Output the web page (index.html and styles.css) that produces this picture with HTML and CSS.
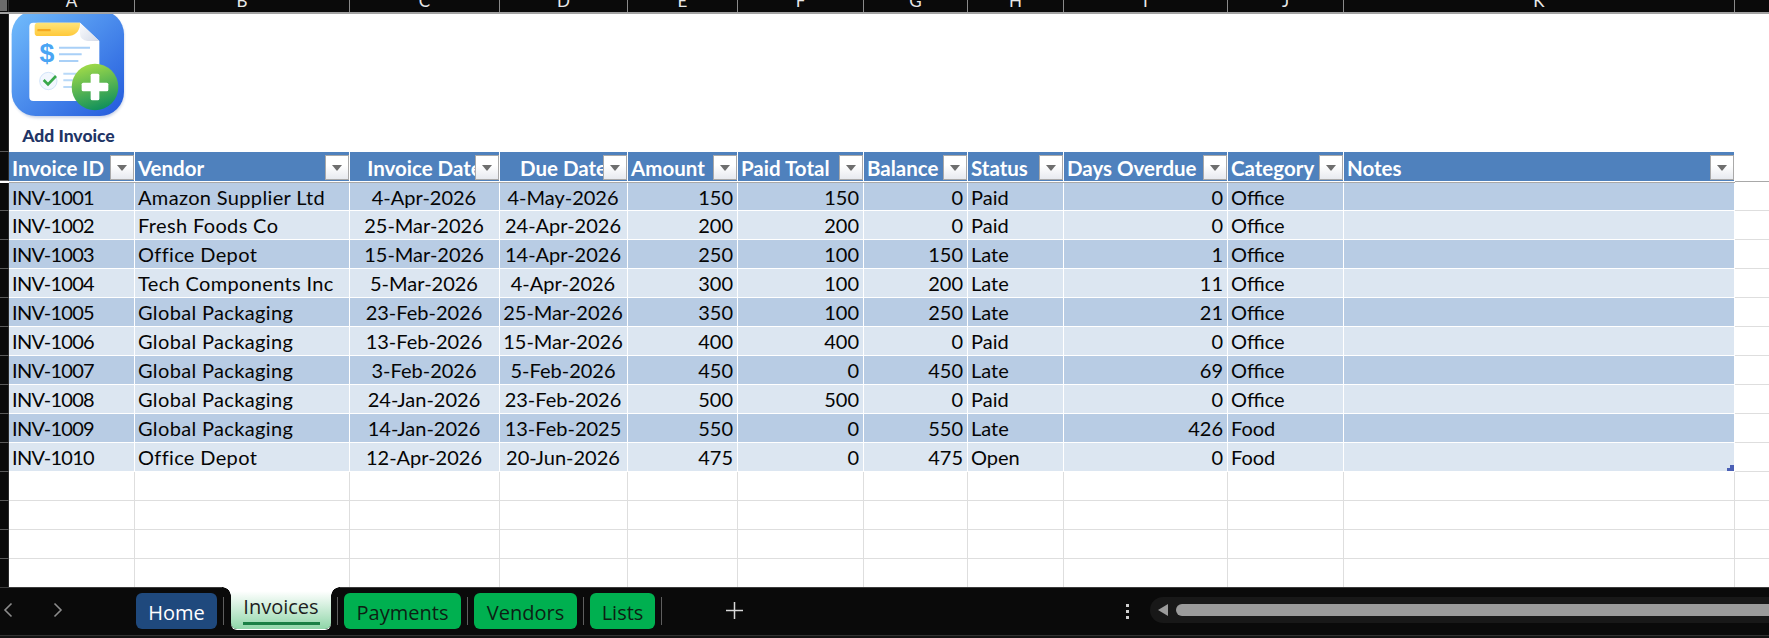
FILE: index.html
```html
<!DOCTYPE html>
<html lang="en">
<head>
<meta charset="utf-8">
<title>Invoices</title>
<link rel="stylesheet" href="styles.css">
</head>
<body>
<div class="book">
  <div class="row colhead">
    <div class="gut corner"></div>
    <div class="ch"><span>A</span></div><div class="ch"><span>B</span></div><div class="ch"><span>C</span></div><div class="ch"><span>D</span></div><div class="ch"><span>E</span></div><div class="ch"><span>F</span></div><div class="ch"><span>G</span></div><div class="ch"><span>H</span></div><div class="ch"><span>I</span></div><div class="ch"><span>J</span></div><div class="ch"><span>K</span></div><div class="ch"></div>
  </div>

  <div class="row picrow">
    <div class="gut"></div>
    <div class="pic">
      <svg class="icon" viewBox="33 39 345 324" aria-hidden="true">
        <defs>
          <linearGradient id="bg" x1="0" y1="0" x2="1" y2="1"><stop offset="0" stop-color="#72bdfc"/><stop offset="1" stop-color="#2259dc"/></linearGradient>
          <linearGradient id="tab" x1="0" y1="0" x2="0" y2="1"><stop offset="0" stop-color="#ffe47a"/><stop offset="1" stop-color="#ffc93a"/></linearGradient>
          <linearGradient id="gr" x1="0.3" y1="0" x2="0.6" y2="1"><stop offset="0" stop-color="#a4dc48"/><stop offset="1" stop-color="#0e8f5c"/></linearGradient>
          <linearGradient id="fold" x1="0" y1="0" x2="1" y2="1"><stop offset="0" stop-color="#fbfcfe"/><stop offset="1" stop-color="#d5dbe8"/></linearGradient>
          <filter id="sh" x="-20%" y="-20%" width="140%" height="140%"><feGaussianBlur stdDeviation="5"/></filter>
        </defs>
        <rect x="40" y="36" width="332" height="314" rx="70" fill="#3a5ea8" opacity=".3" filter="url(#sh)"/>
        <rect x="35" y="28" width="337" height="317" rx="72" fill="url(#bg)"/>
        <path d="M100 65H240L298 120V288a12 12 0 0 1-12 12H100a12 12 0 0 1-12-12V77a12 12 0 0 1 12-12Z" fill="#fff"/>
        <path d="M240 65L298 120H262a22 22 0 0 1-22-22Z" fill="url(#fold)"/>
        <path d="M114 65H240V72C238 92 224 105 204 105H114a10 10 0 0 1-10-10V75a10 10 0 0 1 10-10Z" fill="url(#tab)"/>
        <rect x="112" y="84" width="40" height="7" rx="2" fill="#f5a81f"/>
        <text x="141" y="184" class="dollar">$</text>
        <path d="M177 140H270M177 160H245M177 180H235" stroke="#a9d0f7" stroke-width="6" fill="none"/>
        <circle cx="145" cy="240" r="26" fill="#f2f7fe" stroke="#d3e5fa" stroke-width="3"/>
        <path d="M131 237L144 250L168 225" stroke="#38a84a" stroke-width="8" fill="none"/>
        <path d="M190 218H235M190 238H220M190 258H220" stroke="#b9d9f8" stroke-width="6" fill="none"/>
        <circle cx="285" cy="258" r="70" fill="url(#gr)"/>
        <rect x="245" y="245" width="80" height="26" rx="5" fill="#fff"/>
        <rect x="272" y="218" width="26" height="80" rx="5" fill="#fff"/>
      </svg>
      <div class="pic-label">Add Invoice</div>
    </div>
  </div>

  <div class="row thead">
    <div class="gut"></div>
    <div class="th"><span>Invoice ID</span><i class="btn"></i></div>
    <div class="th"><span>Vendor</span><i class="btn"></i></div>
    <div class="th mid"><span>Invoice Date</span><i class="btn"></i></div>
    <div class="th mid"><span>Due Date</span><i class="btn"></i></div>
    <div class="th"><span>Amount</span><i class="btn"></i></div>
    <div class="th"><span>Paid Total</span><i class="btn"></i></div>
    <div class="th"><span>Balance</span><i class="btn"></i></div>
    <div class="th"><span>Status</span><i class="btn"></i></div>
    <div class="th"><span>Days Overdue</span><i class="btn"></i></div>
    <div class="th"><span>Category</span><i class="btn"></i></div>
    <div class="th"><span>Notes</span><i class="btn"></i></div>
    <div class="th-rest"></div>
  </div>

  <div class="row tr odd first"><div class="gut"></div><div class="td id">INV-1001</div><div class="td ven-name">Amazon Supplier Ltd</div><div class="td c">4-Apr-2026</div><div class="td c">4-May-2026</div><div class="td r">150</div><div class="td r">150</div><div class="td r">0</div><div class="td">Paid</div><div class="td r">0</div><div class="td">Office</div><div class="td"></div><div class="rest"></div></div>
  <div class="row tr even"><div class="gut"></div><div class="td id">INV-1002</div><div class="td ven-name">Fresh Foods Co</div><div class="td c">25-Mar-2026</div><div class="td c">24-Apr-2026</div><div class="td r">200</div><div class="td r">200</div><div class="td r">0</div><div class="td">Paid</div><div class="td r">0</div><div class="td">Office</div><div class="td"></div><div class="rest"></div></div>
  <div class="row tr odd"><div class="gut"></div><div class="td id">INV-1003</div><div class="td ven-name">Office Depot</div><div class="td c">15-Mar-2026</div><div class="td c">14-Apr-2026</div><div class="td r">250</div><div class="td r">100</div><div class="td r">150</div><div class="td">Late</div><div class="td r">1</div><div class="td">Office</div><div class="td"></div><div class="rest"></div></div>
  <div class="row tr even"><div class="gut"></div><div class="td id">INV-1004</div><div class="td ven-name">Tech Components Inc</div><div class="td c">5-Mar-2026</div><div class="td c">4-Apr-2026</div><div class="td r">300</div><div class="td r">100</div><div class="td r">200</div><div class="td">Late</div><div class="td r">11</div><div class="td">Office</div><div class="td"></div><div class="rest"></div></div>
  <div class="row tr odd"><div class="gut"></div><div class="td id">INV-1005</div><div class="td ven-name">Global Packaging</div><div class="td c">23-Feb-2026</div><div class="td c">25-Mar-2026</div><div class="td r">350</div><div class="td r">100</div><div class="td r">250</div><div class="td">Late</div><div class="td r">21</div><div class="td">Office</div><div class="td"></div><div class="rest"></div></div>
  <div class="row tr even"><div class="gut"></div><div class="td id">INV-1006</div><div class="td ven-name">Global Packaging</div><div class="td c">13-Feb-2026</div><div class="td c">15-Mar-2026</div><div class="td r">400</div><div class="td r">400</div><div class="td r">0</div><div class="td">Paid</div><div class="td r">0</div><div class="td">Office</div><div class="td"></div><div class="rest"></div></div>
  <div class="row tr odd"><div class="gut"></div><div class="td id">INV-1007</div><div class="td ven-name">Global Packaging</div><div class="td c">3-Feb-2026</div><div class="td c">5-Feb-2026</div><div class="td r">450</div><div class="td r">0</div><div class="td r">450</div><div class="td">Late</div><div class="td r">69</div><div class="td">Office</div><div class="td"></div><div class="rest"></div></div>
  <div class="row tr even"><div class="gut"></div><div class="td id">INV-1008</div><div class="td ven-name">Global Packaging</div><div class="td c">24-Jan-2026</div><div class="td c">23-Feb-2026</div><div class="td r">500</div><div class="td r">500</div><div class="td r">0</div><div class="td">Paid</div><div class="td r">0</div><div class="td">Office</div><div class="td"></div><div class="rest"></div></div>
  <div class="row tr odd"><div class="gut"></div><div class="td id">INV-1009</div><div class="td ven-name">Global Packaging</div><div class="td c">14-Jan-2026</div><div class="td c">13-Feb-2025</div><div class="td r">550</div><div class="td r">0</div><div class="td r">550</div><div class="td">Late</div><div class="td r">426</div><div class="td">Food</div><div class="td"></div><div class="rest"></div></div>
  <div class="row tr even"><div class="gut"></div><div class="td id">INV-1010</div><div class="td ven-name">Office Depot</div><div class="td c">12-Apr-2026</div><div class="td c">20-Jun-2026</div><div class="td r">475</div><div class="td r">0</div><div class="td r">475</div><div class="td">Open</div><div class="td r">0</div><div class="td">Food</div><div class="td handle-cell"><i class="handle"></i></div><div class="rest"></div></div>

  <div class="row blank"><div class="gut"></div><div></div><div></div><div></div><div></div><div></div><div></div><div></div><div></div><div></div><div></div><div></div><div class="rest"></div></div>
  <div class="row blank"><div class="gut"></div><div></div><div></div><div></div><div></div><div></div><div></div><div></div><div></div><div></div><div></div><div></div><div class="rest"></div></div>
  <div class="row blank"><div class="gut"></div><div></div><div></div><div></div><div></div><div></div><div></div><div></div><div></div><div></div><div></div><div></div><div class="rest"></div></div>
  <div class="row blank last"><div class="gut"></div><div></div><div></div><div></div><div></div><div></div><div></div><div></div><div></div><div></div><div></div><div></div><div class="rest"></div></div>

  <div class="tabbar">
    <div class="nav">
      <svg class="chev" viewBox="0 0 10 16"><path d="M8.5 1.5L2 8L8.5 14.5"/></svg>
      <svg class="chev" viewBox="0 0 10 16"><path d="M1.5 1.5L8 8L1.5 14.5"/></svg>
    </div>
    <div class="tab home">Home</div>
    <i class="sep"></i>
    <div class="tab active"><span>Invoices</span><i class="bar"></i></div>
    <i class="sep"></i>
    <div class="tab green pay">Payments</div>
    <i class="sep"></i>
    <div class="tab green ven">Vendors</div>
    <i class="sep"></i>
    <div class="tab green lis">Lists</div>
    <i class="sep"></i>
    <svg class="plus" viewBox="0 0 18 18"><path d="M9 0V18M0 9H18"/></svg>
    <div class="dots"><i></i><i></i><i></i></div>
    <div class="track"><i class="arrow"></i><div class="thumb"></div></div>
  </div>
  <div class="strip"></div>
</div>
</body>
</html>
```

FILE: styles.css
```css
* { box-sizing: border-box; }
html, body { margin: 0; padding: 0; }
body {
  width: 1769px;
  height: 638px;
  overflow: hidden;
  background: #fff;
  font-family: Lato, "Liberation Sans", sans-serif;
  color: #050505;
}
.book { display: flex; flex-direction: column; height: 638px; }
.row {
  display: grid;
  grid-template-columns: 9px 126px 215px 150px 128px 110px 126px 104px 96px 164px 116px 391px 34px;
}
.gut { background: #0a0a0a; border-bottom: 1px solid #5a5a5a; border-right: 1px solid #2a2a2a; }

/* column letters */
.colhead { height: 14px; background: #0a0a0a; border-bottom: 2px solid #a2a2a2; }
.corner { border-bottom: 0; background: linear-gradient(#6b6b6b, #6b6b6b) no-repeat 0 0 / 7px 11px, #0a0a0a; }
.ch {
  height: 12px;
  overflow: hidden;
  display: flex;
  align-items: flex-end;
  justify-content: center;
  padding-bottom: 2px;
  border-right: 1px solid #8a8a8a;
  color: #e8e8e8;
  font-size: 17px;
  line-height: 18px;
}
.ch:last-child { border-right: 0; }

/* picture row */
.picrow { height: 138px; }
.pic { grid-column: 2 / 4; padding-left: 2px; }
.icon { display: block; width: 115px; height: 108px; }
.dollar {
  font-family: "Liberation Sans", sans-serif;
  font-size: 80px;
  font-weight: 700;
  text-anchor: middle;
  fill: #4aa5f4;
}
.pic-label {
  width: 115px;
  margin-top: 4px;
  text-align: center;
  color: #1f3566;
  font-weight: 900;
  font-size: 17.5px;
  line-height: 20px;
  white-space: nowrap;
}

/* table header */
.thead { height: 31px; }
.th {
  position: relative;
  height: 29px;
  background: #4f81bd;
  border-right: 1px solid #fff;
  box-shadow: 0 1px 0 #fff, 0 2px 0 #a8a8a8;
  overflow: hidden;
  padding: 2px 0 0 3px;
  color: #fff;
  font-weight: 700;
  font-size: 20.5px;
  line-height: 29px;
  white-space: nowrap;
}
.thead > .gut { height: 29px; }
.th-rest { height: 31px; box-shadow: inset 0 -1px 0 #fff, inset 0 -2px 0 #a8a8a8; }
.th.mid { text-align: center; padding: 2px 0 0; }
.btn {
  position: absolute;
  right: 0;
  top: 3px;
  width: 24px;
  height: 25px;
  background: linear-gradient(#fff 40%, #e7eaef);
  border: 1px solid #a9a9a9;
}
.btn::after {
  content: "";
  position: absolute;
  left: 6px;
  top: 9px;
  border-left: 5px solid transparent;
  border-right: 5px solid transparent;
  border-top: 6px solid #6e6e6e;
}

/* table body */
.tr { height: 29px; }
.tr.first { height: 28px; }
.td {
  padding: 0 4px 0 3px;
  border-right: 1px solid #fff;
  border-bottom: 1px solid #fff;
  font-size: 20px;
  line-height: 28px;
  white-space: nowrap;
  overflow: hidden;
}
.id { letter-spacing: -0.7px; }
.ven-name { letter-spacing: 0.35px; }
.odd .td { background: #b8cce4; }
.even .td { background: #dce6f1; }
.c { text-align: center; }
.r { text-align: right; }
.rest { border-bottom: 1px solid #dedede; }
.handle-cell { position: relative; }
.handle {
  position: absolute;
  right: 0;
  bottom: 0;
  width: 7px;
  height: 6px;
  background: linear-gradient(#4a5fb5, #4a5fb5) no-repeat 3px 0 / 4px 3px,
              linear-gradient(#4a5fb5, #4a5fb5) no-repeat 0 3px / 7px 3px;
}

/* empty grid */
.blank { height: 29px; }
.blank.last { height: 28px; }
.blank > div { border-right: 1px solid #dedede; border-bottom: 1px solid #dedede; }
.blank > .gut { border-right: 1px solid #2a2a2a; border-bottom: 1px solid #5a5a5a; }
.blank.last > div { border-bottom: 0; }
.blank > .rest { border-right: 0; }

/* sheet tabs */
.tabbar {
  flex: 1;
  display: flex;
  align-items: flex-start;
  background: #0a0a0a;
  border-top: 1px solid #3c3c3c;
  font-family: "Open Sans", "Noto Sans", sans-serif;
}
.nav { width: 136px; padding: 14px 0 0 3px; display: flex; gap: 40px; flex: none; }
.chev { width: 10px; height: 16px; fill: none; stroke: #8c8c8c; stroke-width: 1.6; }
.tab {
  height: 36px;
  margin-top: 5px;
  border-radius: 6px;
  text-align: center;
  font-size: 20px;
  line-height: 39px;
  flex: none;
  white-space: nowrap;
}
.home { width: 81px; background: #1f497d; color: #fff; }
.green { background: #00b050; color: #0d1f14; }
.pay { width: 117px; }
.ven { width: 103px; }
.lis { width: 65px; }
.sep { flex: none; width: 1px; height: 28px; margin: 9px 6px 0; background: #5e5e5e; }
.active {
  position: relative;
  display: flex;
  flex-direction: column;
  align-items: center;
  width: 100px;
  height: 42px;
  margin-top: -1px;
  margin-left: 1px;
  padding-top: 6px;
  border-radius: 0 0 6px 6px;
  background: linear-gradient(#fff 10%, #8fd6a8);
  box-shadow: 0 1px 0 #fff;
  color: #1e1e1e;
  line-height: 27px;
}
.bar { flex: none; width: 77px; height: 3px; margin-top: 2px; background: #1a7f44; }
.active::before, .active::after {
  content: "";
  position: absolute;
  top: 0;
  width: 9px;
  height: 9px;
}
.active::before { left: -9px; background: radial-gradient(circle at 0 100%, #0a0a0a 8.5px, #fff 9px); }
.active::after { right: -9px; background: radial-gradient(circle at 100% 100%, #0a0a0a 8.5px, #fff 9px); }
.plus { flex: none; width: 17px; height: 17px; margin: 14px 0 0 58px; fill: none; stroke: #d8d8d8; stroke-width: 1.6; }
.dots { flex: none; display: flex; flex-direction: column; gap: 3px; margin: 16px 0 0 383px; width: 3px; }
.dots i { width: 3px; height: 3px; background: #d0d0d0; }
.track {
  flex: none;
  display: flex;
  align-items: center;
  width: 622px;
  height: 26px;
  margin: 9px 0 0 21px;
  padding-left: 8px;
  background: #181818;
  border-radius: 13px 0 0 13px;
}
.arrow { flex: none; width: 0; height: 0; border-top: 6px solid transparent; border-bottom: 6px solid transparent; border-right: 10px solid #9b9b9b; }
.thumb { flex: 1; height: 12px; margin-left: 8px; background: #9b9b9b; border-radius: 6px 0 0 6px; }
.strip { height: 3px; background: #141414; border-top: 1px solid #333; }
```
